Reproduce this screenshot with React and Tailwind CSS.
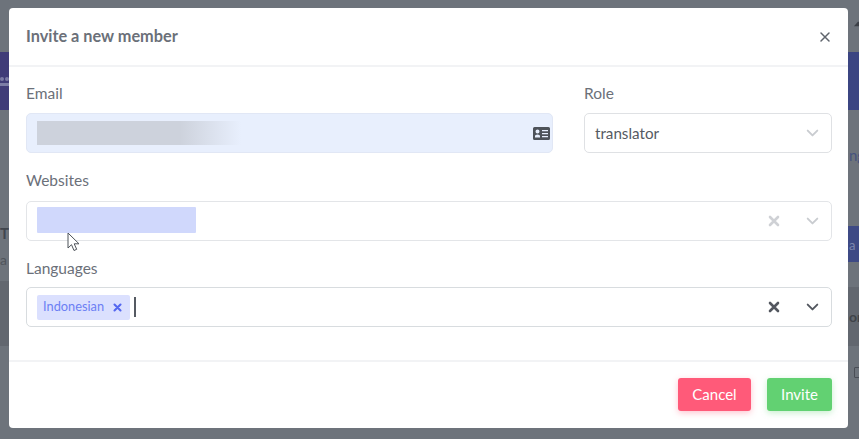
import React from "react";

const Chevron = ({ className }) => (
  <svg viewBox="0 0 16 10" className={className} fill="none" stroke="currentColor" strokeWidth="2.4" strokeLinecap="round" strokeLinejoin="round">
    <path d="M2 2l6 6 6-6" />
  </svg>
);

const Cross = ({ className, w = 2.6 }) => (
  <svg viewBox="0 0 12 12" className={className} fill="none" stroke="currentColor" strokeWidth={w} strokeLinecap="round">
    <path d="M2 2l8 8M10 2l-8 8" />
  </svg>
);

const IdCard = () => (
  <svg viewBox="0 0 17 13" className="w-[17px] h-[13px] text-[#4d5259]">
    <path fill="currentColor" fillRule="evenodd" d="M1.5 0h14A1.5 1.5 0 0 1 17 1.5v10a1.5 1.5 0 0 1-1.5 1.5h-14A1.5 1.5 0 0 1 0 11.500v-10A1.500 1.500 0 0 1 1.500 0ZM2 10.500h5V9.300C7 8.200 6 7.500 4.500 7.500S2 8.200 2 9.300ZM4.500 6.500a2 2 0 1 0 0-4 2 2 0 0 0 0 4ZM9 3v1.200h6V3ZM9 6v1.200h6V6ZM9 9v1.200h6V9Z" />
  </svg>
);

const Cursor = () => (
  <svg viewBox="0 0 14 20" className="w-[14px] h-[20px]">
    <path d="M1 1v15l3.500-3.300 2.500 5.800 2.700-1.200-2.500-5.500H12Z" fill="#fff" stroke="#4d5259" strokeWidth="1" strokeLinejoin="round" />
  </svg>
);

const Field = ({ label, children, className = "" }) => (
  <div className={className}>
    <div className="h-[21px] text-[15.5px] leading-[20px] text-[#6b7079]">{label}</div>
    {children}
  </div>
);

export default function App() {
  return (
    <div className="relative h-[439px] w-[859px] overflow-hidden bg-[#6d737b] font-['Lato','Open_Sans',sans-serif]">
      {/* dimmed page behind the dialog */}
      <div className="absolute left-0 top-[52px] h-[58px] w-full bg-gradient-to-r from-[#403c78] to-[#3b4582]" />
      <div className="absolute right-0 top-[226px] h-[36px] w-[20px] bg-[#3e4a85]" />
      <div className="absolute left-0 top-[281px] h-[65px] w-[20px] bg-[#62676f]" />
      <div className="absolute right-0 top-[287px] h-[59px] w-[20px] bg-[#62676f]" />
      <svg viewBox="0 0 9 9" className="absolute left-0 top-[75px] h-[13px] w-[9px] text-[#7c7da6]">
        <circle cx="2" cy="2" r="2" fill="currentColor" />
        <circle cx="7" cy="2" r="2" fill="currentColor" />
        <rect x="0" y="6" width="9" height="3" fill="currentColor" />
      </svg>
      <svg viewBox="0 0 9 8" className="absolute left-[854px] top-[20px] h-[8px] w-[5px] text-[#3c4047]">
        <path d="M0 8 7 0h2v8Z" fill="currentColor" />
      </svg>
      <div className="absolute left-[849px] top-[145px] text-[15px] leading-5 text-[#46537f]">ng</div>
      <div className="absolute left-[849px] top-[235px] text-[13px] leading-5 text-[#7d86ad]">a</div>
      <div className="absolute left-[849px] top-[307px] text-[14px] font-bold leading-5 text-[#3f4349]">or</div>
      <div className="absolute left-0 top-[223px] text-[15px] font-bold leading-5 text-[#41464e]">T</div>
      <div className="absolute left-0 top-[250px] text-[14px] leading-5 text-[#50555c]">a</div>
      <div className="absolute left-[854px] top-[367px] h-[11px] w-[11px] rounded-[1px] border border-[#4a4e56]" />

      {/* dialog */}
      <div className="absolute left-[9px] top-[8px] flex h-[420px] w-[839px] flex-col rounded-[4px] bg-white">
        <header className="flex h-[59px] shrink-0 items-center justify-between border-b-2 border-[#f2f3f5] pl-[17px] pr-[17px]">
          <h2 className="text-[16.3px] font-bold text-[#6b7079]">Invite a new member</h2>
          <Cross className="h-[12px] w-[12px] text-[#5f646c]" w={1.5} />
        </header>

        <div className="flex flex-1 flex-col pl-[17px] pr-[16px] pt-[16px]">
          <div className="flex gap-[31px]">
            <Field label="Email" className="w-[527px]">
              <div className="mt-[9px] flex h-[40px] items-center justify-between rounded-[5px] border border-[#e1e7f5] bg-[#e8effd] pl-[10px] pr-[1px]">
                <div className="h-[24px] w-[204px] bg-gradient-to-r from-[#cdd2dc] from-70% to-[#e8effd]" />
                <span className="mr-[1px] flex"><IdCard /></span>
              </div>
            </Field>
            <Field label="Role" className="flex-1">
              <div className="mt-[9px] flex h-[40px] items-center justify-between rounded-[5px] border border-[#dfe1e4] bg-white pl-[10px] pr-[12px]">
                <span className="text-[15.2px] text-[#555a62]">translator</span>
                <Chevron className="h-[8px] w-[13px] text-[#c9ccd0]" />
              </div>
            </Field>
          </div>

          <Field label="Websites" className="relative mt-[17px]">
            <div className="mt-[10px] flex h-[40px] items-start justify-between rounded-[5px] border border-[#e3e5e8] bg-white pl-[10px] pr-[12px] pt-[5px]">
              <div className="h-[26px] w-[159px] rounded-[1px] bg-[#d0d8fc]" />
              <div className="flex h-[28px] items-center gap-[26px]">
                <Cross className="h-[12px] w-[12px] text-[#cfd1d5]" />
                <Chevron className="h-[8px] w-[13px] text-[#c9ccd0]" />
              </div>
            </div>
            <div className="absolute left-[41px] top-[62px]"><Cursor /></div>
          </Field>

          <Field label="Languages" className="mt-[17px]">
            <div className="mt-[8px] flex h-[40px] items-center justify-between rounded-[5px] border border-[#d8dcdf] bg-white pl-[10px] pr-[12px]">
              <div className="flex items-center">
                <div className="flex h-[25px] w-[93px] items-center rounded-[2px] bg-[#dbe0fe] pl-[6px]">
                  <span className="text-[12.8px] text-[#6c7ff4]">Indonesian</span>
                  <Cross className="ml-[9px] h-[9px] w-[9px] text-[#5568f0]" w={2.8} />
                </div>
                <div className="ml-[4px] h-[20px] w-[2px] bg-[#555a62]" />
              </div>
              <div className="flex items-center gap-[26px]">
                <Cross className="h-[12px] w-[12px] text-[#53575f]" />
                <Chevron className="h-[8px] w-[13px] text-[#53575f]" />
              </div>
            </div>
          </Field>
        </div>

        <footer className="flex h-[68px] shrink-0 items-start justify-end gap-[16px] border-t-2 border-[#f2f3f5] pr-[16px] pt-[16px]">
          <button className="h-[33px] w-[73px] rounded-[3px] bg-[#ff5a79] text-[15px] text-white shadow-[0_2px_6px_rgba(255,90,121,0.35)]">Cancel</button>
          <button className="h-[33px] w-[65px] rounded-[3px] bg-[#62d172] text-[15px] text-white shadow-[0_2px_6px_rgba(98,209,114,0.35)]">Invite</button>
        </footer>
      </div>
    </div>
  );
}
